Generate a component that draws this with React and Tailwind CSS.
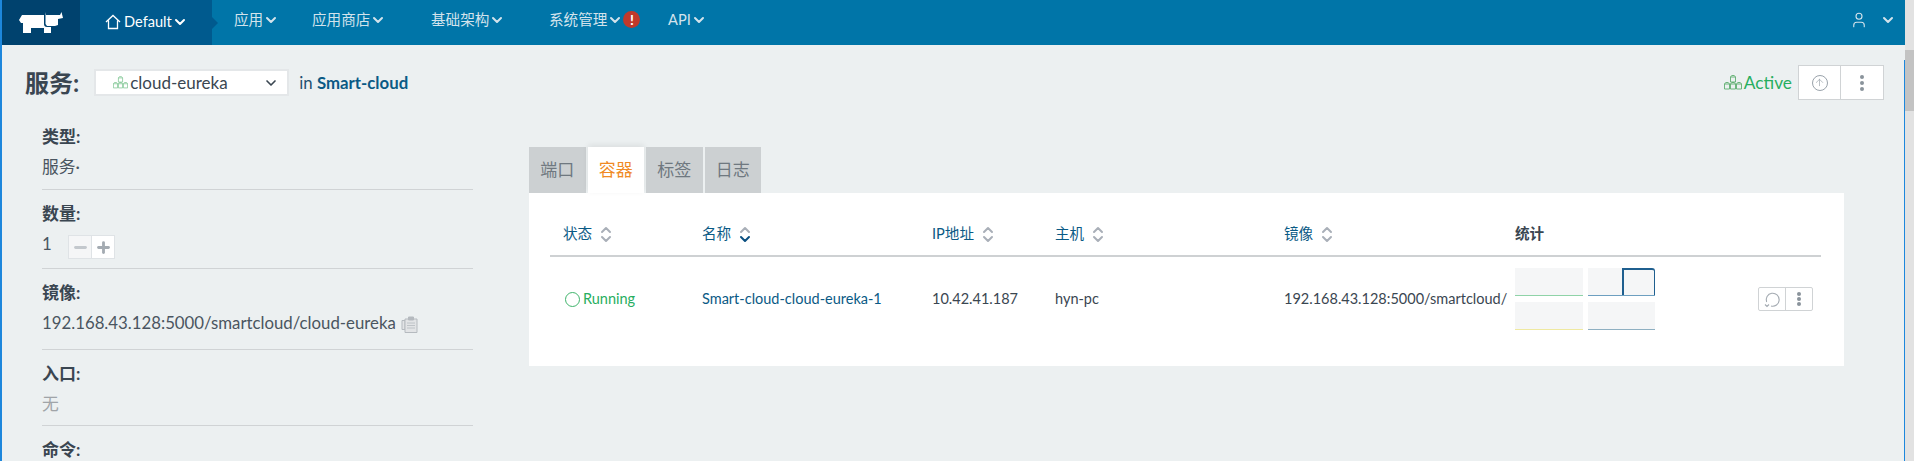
import React from 'react';
import { ChevronDown, ChevronUp, User, ArrowUp, Plus, Minus } from 'lucide-react';

const navItems = [
  { label: '应用', width: 'w-[78px]' },
  { label: '应用商店', width: 'w-[119px]' },
  { label: '基础架构', width: 'w-[118px]' },
  { label: '系统管理', width: 'w-[119px]' },
  { label: 'API', width: '' },
];

const cube = (x, y) => `M${x} ${y + 2}h5v5h-5z M${x} ${y + 2}l1.2-1.5h2.6l1.2 1.5`;

const Cubes = ({ className }) => (
  <svg viewBox="0 0 18 15" className={className} fill="none" stroke="currentColor" strokeWidth="0.9">
    <path d={`${cube(6.5, 0)} ${cube(0.5, 7)} ${cube(6.5, 7)} ${cube(12.5, 7)}`} />
  </svg>
);

const Logo = () => (
  <svg viewBox="0 0 44 21" className="w-[44px] h-[21px]" fill="#fff">
    <path d="M0 8 L3 3 H25 V12 Q25 15 28 15 H32 V21 H25 V16 H12 V21 H4 V11 L2 11 Z" />
    <path d="M26.5 0 L27 3 H37 L41 3 L42.5 0 L44 6 L39 7 V13 L36 14 H28 L26.5 12 Z" />
  </svg>
);

const HomeIcon = () => (
  <svg viewBox="0 0 16 16" className="w-[16px] h-[16px] mr-[3px]" fill="none" stroke="currentColor" strokeWidth="1.3">
    <path d="M1 8 L8 1.5 L15 8 M3.5 6.5 V14.5 H12.5 V6.5" />
  </svg>
);

const ClipboardIcon = () => (
  <svg viewBox="0 0 17 17" className="w-[17px] h-[17px] ml-[5px] mt-[3px]" fill="#e2e4e6" stroke="#b5babf" strokeWidth="1">
    <path d="M1 4.5h3v9H1z" />
    <path d="M4 3h12v13.5H4z" />
    <path d="M7.5 1h5v3h-5z" fill="#b5babf" />
    <path d="M6 7h8 M6 9.5h8 M6 12h8" strokeWidth="0.8" />
  </svg>
);

const RefreshIcon = () => (
  <svg viewBox="0 0 17 17" className="w-[17px] h-[17px] text-[#a4abb2]" fill="none" stroke="currentColor" strokeWidth="1.1">
    <path d="M2.6 11 A6.5 6.5 0 1 1 7 15" />
    <path d="M1 13.5 L3 15.5 L5 13.5" />
  </svg>
);

const SortIcon = ({ active }) => (
  <span className="flex flex-col items-center ml-[6px] -space-y-[7px]">
    <ChevronUp size={16} strokeWidth={3} className="text-[#a9afb8]" />
    <ChevronDown size={16} strokeWidth={3} className={active ? 'text-[#0a4f80]' : 'text-[#a9afb8]'} />
  </span>
);

const Field = ({ label, children, last, height }) => (
  <div className={last ? 'pt-[14px]' : 'pt-[14px] pb-[10px] border-b border-[#d0d3d5]'}>
    <div className="font-bold text-[17px] leading-[20px] text-[#3a4651]">{label}</div>
    <div className={`mt-[10px] text-[16.8px] leading-[20px] text-[#4a5560] ${height}`}>{children}</div>
  </div>
);

const Spark = ({ color, children }) => (
  <div className={`relative h-[28px] bg-[#f5f6f7] border-b ${color}`}>{children}</div>
);

const columns = [
  { label: '状态' },
  { label: '名称', active: true },
  { label: 'IP地址' },
  { label: '主机' },
  { label: '镜像' },
];

const gridCols = 'grid grid-cols-[139px_230px_123px_229px_244px_1fr]';

const Dots = ({ gap }) => (
  <span className={`flex flex-col items-center justify-center ${gap}`}>
    <span className="w-[4px] h-[4px] rounded-full bg-[#8a939b]" />
    <span className="w-[4px] h-[4px] rounded-full bg-[#8a939b]" />
    <span className="w-[4px] h-[4px] rounded-full bg-[#8a939b]" />
  </span>
);

export default function App() {
  return (
    <div className="flex h-[461px] overflow-hidden bg-[#ecf0f1] font-['Lato','Noto_Sans_CJK_SC',sans-serif]">
      <div className="flex-1 min-w-0 border-l-2 border-[#1d87dc]">
        <header className="flex items-center h-[45px] bg-[#0075a8] text-[14.6px] text-[#d3e3ec]">
          <div className="flex items-center justify-center w-[78px] h-full bg-[#00426e]">
            <Logo />
          </div>
          <div className="flex items-center w-[132px] h-full pl-[25px] pb-[2px] bg-[#005a8e] text-white">
            <HomeIcon />
            Default
            <ChevronDown size={16} strokeWidth={3} />
          </div>
          <div className="w-0 h-0 mr-[16px] border-y-[6px] border-y-transparent border-l-[6px] border-l-[#005a8e]" />
          {navItems.map((item) => (
            <div key={item.label} className={`flex items-center pb-[5px] ${item.width}`}>
              {item.label}
              <ChevronDown size={16} strokeWidth={3} />
              {item.label === '系统管理' && (
                <span className="flex items-center justify-center w-[17px] h-[17px] rounded-full bg-[#c0392b] text-white text-[14px] font-bold">!</span>
              )}
            </div>
          ))}
          <div className="flex items-center gap-[12px] ml-auto mr-[9px] pb-[5px]">
            <User size={18} strokeWidth={1.5} />
            <ChevronDown size={16} strokeWidth={3} />
          </div>
        </header>

        <div className="border-r border-[#1d87dc] h-[416px]">
          <div className="flex items-center justify-between h-[45px] mt-[15px] pl-[23px] pr-[20px]">
            <div className="flex items-center">
              <span className="font-bold text-[24px] text-[#3a4651]">服务:</span>
              <div className="flex items-center justify-between w-[195px] h-[27px] ml-[15px] pl-[17px] pr-[8px] bg-white border-2 border-[#e4e7e9] text-[17px] text-[#3a4651]">
                <span className="flex items-center gap-[2px]">
                  <Cubes className="w-[15px] h-[13px] text-[#7cc48f]" />
                  cloud-eureka
                </span>
                <ChevronDown size={16} strokeWidth={2.5} />
              </div>
              <span className="ml-[10px] text-[16.8px] text-[#1f4f70]">in <b className="text-[#0a5a85]">Smart-cloud</b></span>
            </div>
            <div className="flex items-center">
              <Cubes className="w-[18px] h-[15px] text-[#5fae6f] mr-[2px]" />
              <span className="text-[17.3px] text-[#27ae60] mr-[6px]">Active</span>
              <div className="flex h-[35px] bg-white border border-[#d0d3d5]">
                <div className="flex items-center justify-center w-[42px] border-r border-[#d0d3d5]">
                  <span className="flex items-center justify-center w-[16px] h-[16px] rounded-full border border-[#9aa3ab]">
                    <ArrowUp size={11} strokeWidth={1.5} className="text-[#9aa3ab]" />
                  </span>
                </div>
                <div className="flex items-center justify-center w-[42px]">
                  <Dots gap="gap-[2px]" />
                </div>
              </div>
            </div>
          </div>

          <div className="flex mt-[8px]">
            <aside className="w-[431px] ml-[40px] shrink-0">
              <Field label="类型:" height="h-[22px]">服务·</Field>
              <Field label="数量:" height="h-[24px]">
                <div className="flex items-center h-[20px]">
                  <span className="w-[26px]">1</span>
                  <div className="flex h-[24px] mt-[6px] border border-[#dfe3e6] bg-white">
                    <span className="flex items-center justify-center w-[23px] bg-[#f5f6f7] border-r border-[#dfe3e6]"><Minus size={17} strokeWidth={4} className="text-[#c3c8cd]" /></span>
                    <span className="flex items-center justify-center w-[22px]"><Plus size={17} strokeWidth={4} className="text-[#a4abb2]" /></span>
                  </div>
                </div>
              </Field>
              <Field label="镜像:" height="h-[26px]">
                <span className="flex items-center">
                  192.168.43.128:5000/smartcloud/cloud-eureka
                  <ClipboardIcon />
                </span>
              </Field>
              <Field label="入口:" height="h-[21px]"><span className="text-[#a0a4a8]">无</span></Field>
              <Field label="命令:" height="h-[20px]" last>{' '}</Field>
            </aside>

            <main className="ml-[56px] w-[1315px] mt-[34px]">
              <div className="flex gap-[2px]">
                {['端口', '容器', '标签', '日志'].map((tab) => (
                  <div
                    key={tab}
                    className={tab === '容器'
                      ? 'flex items-center justify-center w-[56.5px] h-[46px] bg-white text-[17px] text-[#f08a24] shadow-[0_-2px_6px_rgba(0,0,0,0.08)]'
                      : 'flex items-center justify-center w-[56.5px] h-[46px] bg-[#ccd0d2] text-[17px] text-[#6f7880]'}
                  >
                    {tab}
                  </div>
                ))}
              </div>
              <div className="h-[173px] pl-[21px] pr-[23px] bg-white">
                <div className={`${gridCols} items-center h-[64px] pt-[20px] border-b-2 border-[#ced1d3] text-[14.6px] text-[#0a5a85]`}>
                  {columns.map((col) => (
                    <div key={col.label} className="flex items-center pl-[13px]">
                      {col.label}
                      <SortIcon active={col.active} />
                    </div>
                  ))}
                  <div className="font-bold text-[#3a4651]">统计</div>
                </div>
                <div className={`${gridCols} items-center h-[84px] text-[14.5px] text-[#3a4651]`}>
                  <div className="flex items-center pl-[15px] text-[#27ae60]">
                    <span className="w-[15px] h-[15px] mr-[3px] rounded-full border border-[#3fb46b]" />
                    Running
                  </div>
                  <div className="pl-[13px] text-[#0a5a85]">Smart-cloud-cloud-eureka-1</div>
                  <div className="pl-[13px]">10.42.41.187</div>
                  <div className="pl-[13px]">hyn-pc</div>
                  <div className="pl-[13px] whitespace-nowrap">192.168.43.128:5000/smartcloud/</div>
                  <div className="flex items-center justify-between pr-[8px]">
                    <div className="grid grid-cols-[68px_67px] gap-x-[5px] gap-y-[6px] w-[140px]">
                      <Spark color="border-[#8fd3a8]" />
                      <Spark color="border-[#6d9fc0]">
                        <div className="absolute right-0 top-0 w-[33px] h-full border-t-2 border-l-2 border-r border-[#1f5f8f] rounded-tr-[3px]" />
                      </Spark>
                      <Spark color="border-[#efe9a0]" />
                      <Spark color="border-[#8fb0c2]" />
                    </div>
                    <div className="flex h-[24px] border border-[#d0d3d5] rounded-[2px]">
                      <span className="flex items-center justify-center w-[27px] border-r border-[#d0d3d5]"><RefreshIcon /></span>
                      <span className="flex items-center justify-center w-[26px]"><Dots gap="gap-[1px]" /></span>
                    </div>
                  </div>
                </div>
              </div>
            </main>
          </div>
        </div>
      </div>

      <div className="flex flex-col w-[9px] shrink-0 bg-[#e2e2e2]">
        <div className="h-[50px]" />
        <div className="h-[61px] bg-[#c3c3c3]" />
      </div>
    </div>
  );
}
